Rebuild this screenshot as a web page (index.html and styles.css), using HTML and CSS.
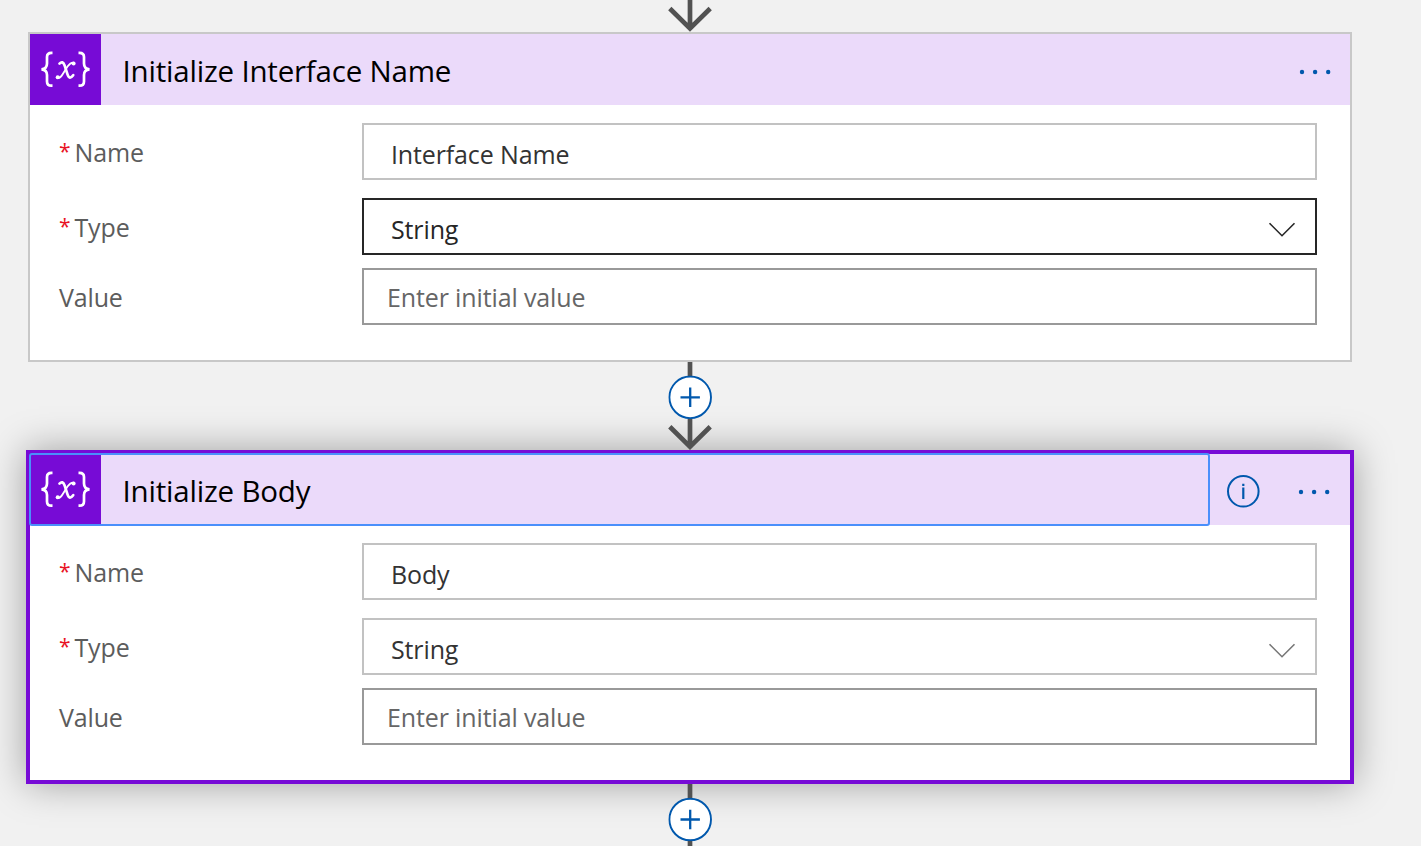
FILE: index.html
```html
<!DOCTYPE html>
<html lang="en">
<head>
<meta charset="utf-8">
<title>Workflow designer</title>
<link rel="stylesheet" href="styles.css">
</head>
<body>
<svg class="defs" width="0" height="0" aria-hidden="true">
  <symbol id="more" viewBox="0 0 34 6">
    <circle cx="3" cy="3" r="2.200"/><circle cx="16.100" cy="3" r="2.200"/><circle cx="29.200" cy="3" r="2.200"/>
  </symbol>
  <symbol id="chevron" viewBox="0 0 28 16">
    <path d="M1.500 1.200 14 13.700 26.500 1.200" fill="none" stroke="currentColor" stroke-width="1.600"/>
  </symbol>
  <symbol id="plus" viewBox="0 0 44 44">
    <circle cx="22" cy="22" r="20.800" fill="#fff" stroke="#0058ad" stroke-width="1.900"/>
    <path d="M12.300 22H31.700M22 12.300V31.700" stroke="#0058ad" stroke-width="2.300"/>
  </symbol>
  <symbol id="variable" viewBox="0 0 71 71">
    <path d="M22.500 18.800H21.500Q17 18.800 17 23V29.500Q17 34.800 11.500 35.300Q17 35.800 17 41V47.500Q17 51.700 21.500 51.700H22.500M48.500 18.800H49.500Q54 18.800 54 23V29.500Q54 34.800 59.500 35.300Q54 35.800 54 41V47.500Q54 51.700 49.500 51.700H48.500" fill="none" stroke="#fff" stroke-width="2.700"/>
    <path d="M29.500 29.600Q32.700 26.400 34.500 31.200L37.600 40.600Q39.500 46.200 43.200 41.200" fill="none" stroke="#fff" stroke-width="2.700" stroke-linecap="round"/>
    <path d="M44 28.800Q40.800 28 37.500 32.600L32.500 40.500Q29.800 45 27 43.700" fill="none" stroke="#fff" stroke-width="1.800" stroke-linecap="round"/>
    <circle cx="43.600" cy="29.600" r="2" fill="#fff"/><circle cx="27.700" cy="43.200" r="2" fill="#fff"/>
  </symbol>
</svg>
<main class="flow">
  <svg class="link link-top" viewBox="0 0 44 32"><path d="M22 0V28M1.800 8.500 22 28.500 42.200 8.500" class="arrow"/></svg>

  <section class="card">
    <header class="head">
      <div class="heading">
        <svg class="icon"><use href="#variable"/></svg>
        <h2 class="title">Initialize Interface Name</h2>
      </div>
      <svg class="more"><use href="#more"/></svg>
    </header>
    <div class="body">
      <div class="row"><span class="label"><span class="req">*</span>Name</span><div class="field"><span class="val">Interface Name</span></div></div>
      <div class="row"><span class="label"><span class="req">*</span>Type</span><div class="field active"><span class="val">String</span><svg class="chevron"><use href="#chevron"/></svg></div></div>
      <div class="row last"><span class="label">Value</span><div class="field empty"><span class="hint">Enter initial value</span></div></div>
    </div>
  </section>

  <svg class="link link-mid" viewBox="0 0 44 88"><path d="M22 0V84M1.800 64.800 22 84.600 42.200 64.800" class="arrow"/><use href="#plus" x="0.200" y="13.300" width="44" height="44"/></svg>

  <section class="card selected">
    <header class="head">
      <div class="heading focused">
        <svg class="icon"><use href="#variable"/></svg>
        <h2 class="title">Initialize Body</h2>
      </div>
      <svg class="info" viewBox="0 0 34 34"><circle cx="17.300" cy="17.300" r="15.300" fill="none" stroke="#0058ad" stroke-width="2"/><path d="M17.300 13.500V25M17.300 9.700V11.900" stroke="#0058ad" stroke-width="2.200"/></svg>
      <svg class="more"><use href="#more"/></svg>
    </header>
    <div class="body">
      <div class="row"><span class="label"><span class="req">*</span>Name</span><div class="field"><span class="val">Body</span></div></div>
      <div class="row"><span class="label"><span class="req">*</span>Type</span><div class="field"><span class="val">String</span><svg class="chevron"><use href="#chevron"/></svg></div></div>
      <div class="row last"><span class="label">Value</span><div class="field empty"><span class="hint">Enter initial value</span></div></div>
    </div>
  </section>

  <svg class="link link-end" viewBox="0 0 44 62"><path d="M22 0V62" class="arrow"/><use href="#plus" x="0.200" y="13.500" width="44" height="44"/></svg>
</main>
</body>
</html>
```

FILE: styles.css
```css
* { box-sizing: border-box; }
body {
  margin: 0;
  height: 846px;
  overflow: hidden;
  background: #f1f1f1;
  font-family: "Open Sans", "Noto Sans", sans-serif;
}
.defs { display: block; height: 0; }
.flow { display: flex; flex-direction: column; width: 1380px; }
.flow > * { flex: none; align-self: center; }
.link { display: block; width: 44px; position: relative; z-index: 1; }
.link-top { height: 32px; }
.link-mid { height: 88px; }
.link-end { height: 62px; }
.arrow { fill: none; stroke: #525252; stroke-width: 4.700; }
.card {
  width: 1324px;
  height: 330px;
  border: 2px solid #c8c8c8;
  background: #fff;
}
.selected {
  width: 1328px;
  height: 334px;
  border: 4px solid #770bd6;
  box-shadow: 0 0 36px rgba(0, 0, 0, 0.34);
}
.head {
  display: flex;
  align-items: center;
  height: 71px;
  padding-right: 17px;
  background: #ebdafa;
}
.heading { display: flex; align-items: center; flex: 1; height: 71px; }
.focused {
  flex: none;
  width: 1179px;
  outline: 2px solid #4a8ffb;
  outline-offset: -1px;
  border-radius: 2px;
}
.icon { width: 71px; height: 71px; background: #770bd6; }
.title {
  margin: 0 0 0 21.500px;
  font-size: 29.500px;
  line-height: 40px;
  font-weight: 400;
  letter-spacing: -0.200px;
  color: #000;
  white-space: nowrap;
  padding-top: 2px;
}
.more { width: 34px; height: 6px; margin-top: 4px; fill: #0058ad; }
.info { width: 34px; height: 34px; margin: 3px 38px 0 17px; }
.body { display: flex; flex-direction: column; gap: 18px; padding: 18px 33px 0 29px; }
.row { display: flex; height: 57px; }
.row.last { margin-top: -5px; }
.label {
  display: flex;
  width: 303px;
  padding-top: 11px;
  font-size: 25px;
  line-height: 36px;
  letter-spacing: -0.150px;
  color: #5c5c5c;
}
.req { width: 15.500px; font-size: 21px; line-height: 34px; color: #e81123; }
.field {
  display: flex;
  justify-content: space-between;
  width: 955px;
  padding: 11px 19px 0 27px;
  border: 2px solid #c2c2c2;
  font-size: 25px;
  line-height: 36px;
  letter-spacing: -0.130px;
  color: #333;
}
.active { border-color: #262626; color: #262626; }
.empty { padding-left: 23px; padding-top: 9px; border-color: #999; color: #666; }
.chevron { width: 28px; height: 16px; margin-top: 12px; color: #777; }
.active .chevron { margin-top: 11px; color: #262626; }
```
